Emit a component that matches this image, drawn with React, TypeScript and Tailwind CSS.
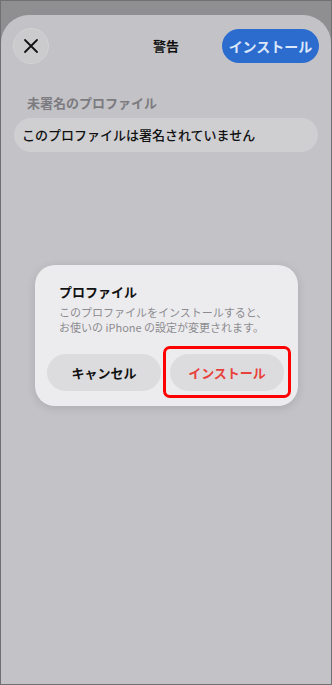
const font = { fontFamily: '"Noto Sans CJK JP", "Noto Sans", sans-serif' };

export default function App() {
  return (
    <div
      className="w-[332px] h-[685px] border border-[#707072] bg-[#8f8f92] pt-[14px] flex flex-col"
      style={font}
    >
      <div className="relative flex-1 bg-[#c3c2c6] rounded-t-[28px]">
        {/* Header */}
        <div className="grid grid-cols-[1fr_auto_1fr] items-center pl-[12px] pr-[12px] pt-[13px]">
          <div>
            <button className="w-[36px] h-[36px] rounded-full bg-[#cbcacd] border border-[#d3d2d5] flex items-center justify-center">
              <svg width="16" height="16" viewBox="0 0 16 16" fill="none">
                <path d="M2 2 L14 14 M14 2 L2 14" stroke="#111" strokeWidth="1.8" strokeLinecap="round" />
              </svg>
            </button>
          </div>
          <div className="text-[13px] font-bold text-[#111]">警告</div>
          <div className="flex justify-end">
            <button className="w-[97px] h-[34px] rounded-full bg-[#2c6ccf] text-[#dbe7fb] text-[14px] font-semibold flex items-center justify-center">
              インストール
            </button>
          </div>
        </div>

        {/* Section */}
        <div className="mt-[30px] pl-[26px] text-[13px] font-semibold text-[#7c7b80] leading-[18px]">
          未署名のプロファイル
        </div>
        <div className="mt-[6px] ml-[13px] mr-[13px] h-[34px] rounded-full bg-[#cfcfd2] flex items-center pl-[8px] text-[13px] font-medium text-[#111]">
          このプロファイルは署名されていません
        </div>

        {/* Dialog */}
        <div className="absolute left-[34px] top-[250px] w-[263px] h-[141px] rounded-[20px] bg-[#ececee] shadow-[0_2px_10px_rgba(0,0,0,0.12)] pt-[18px] px-[12px]">
          <div className="pl-[12px] text-[13px] font-bold text-[#111] leading-[18px]">プロファイル</div>
          <div className="mt-[4px] pl-[12px] text-[11px] text-[#8c8b90] leading-[15px]">
            このプロファイルをインストールすると、
            <br />
            お使いの iPhone の設定が変更されます。
          </div>
          <div className="mt-[19px] flex gap-[9px]">
            <button className="w-[114px] h-[37px] rounded-full bg-[#dcdcdf] text-[13px] font-bold text-[#111] flex items-center justify-center">
              キャンセル
            </button>
            <div className="relative">
              <button className="w-[114px] h-[37px] rounded-full bg-[#dcdcdf] text-[13px] font-semibold text-[#e8413b] flex items-center justify-center">
                インストール
              </button>
              <div className="absolute left-[-7px] top-[-8px] w-[128px] h-[52px] border-[3px] border-[#ff0000] rounded-[7px]" />
            </div>
          </div>
        </div>
      </div>
    </div>
  );
}
